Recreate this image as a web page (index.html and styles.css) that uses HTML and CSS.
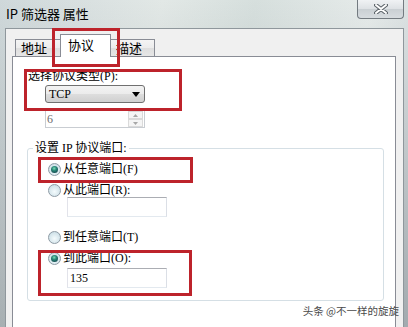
FILE: index.html
```html
<!DOCTYPE html>
<html lang="zh-CN">
<head>
    <meta charset="UTF-8">
    <title>IP 筛选器 属性</title>
    <link rel="stylesheet" href="styles.css">
</head>
<body>
    <div class="frame">
        <div class="titlebar">
            <span class="title">IP 筛选器 属性</span>
            <div class="close-btn">
                <svg width="14" height="10" viewBox="0 0 14 10">
                    <path d="M2 1 L12 9 M12 1 L2 9" stroke="#5b6268" stroke-width="4" stroke-linecap="round"/>
                    <path d="M2 1 L12 9 M12 1 L2 9" stroke="#ffffff" stroke-width="2" stroke-linecap="round"/>
                </svg>
            </div>
        </div>

        <div class="dialog">
            <div class="tabs">
                <div class="tab first">地址</div>
                <div class="tab active">协议</div>
                <div class="tab last">描述</div>
            </div>

            <div class="panel">
                <div class="label">选择协议类型(P):</div>
                <div class="combo">
                    <span>TCP</span>
                    <svg width="8" height="5" viewBox="0 0 8 5"><path d="M0 0 H8 L4 5 Z" fill="#000"/></svg>
                </div>
                <div class="spin">
                    <span class="spin-value">6</span>
                    <div class="spin-btns">
                        <div class="spin-btn"><svg width="5" height="3" viewBox="0 0 5 3"><path d="M0 3 H5 L2.5 0 Z" fill="#a7a7a7"/></svg></div>
                        <div class="spin-btn"><svg width="5" height="3" viewBox="0 0 5 3"><path d="M0 0 H5 L2.5 3 Z" fill="#a7a7a7"/></svg></div>
                    </div>
                </div>

                <fieldset class="group">
                    <legend>设置 IP 协议端口:</legend>
                    <div class="radio-row first-row"><span class="radio checked"></span>从任意端口(F)</div>
                    <div class="radio-row"><span class="radio"></span>从此端口(R):</div>
                    <div class="textbox"></div>
                    <div class="radio-row third-row"><span class="radio"></span>到任意端口(T)</div>
                    <div class="radio-row"><span class="radio checked"></span>到此端口(O):</div>
                    <div class="textbox second">135</div>
                </fieldset>
            </div>
        </div>

        <div class="mark mark-tab"></div>
        <div class="mark mark-type"></div>
        <div class="mark mark-from"></div>
        <div class="mark mark-to"></div>
        <div class="watermark">头条 @不一样的旋旋</div>
    </div>
</body>
</html>
```

FILE: styles.css
```css
body {
    margin: 0;
    font-family: 'Liberation Serif', 'Noto Sans CJK SC', serif;
    font-size: 12px;
    color: #000;
}
.frame {
    position: relative;
    width: 408px;
    height: 327px;
    overflow: hidden;
    box-sizing: border-box;
    padding: 0 4px 0 5px;
    background:
        linear-gradient(to bottom, rgba(255, 255, 255, 0) 0%, rgba(110, 118, 124, 0.45) 100%),
        linear-gradient(100deg, #cfd8da 0%, #e2e8e6 35%, #d6dfdd 55%, #e6ebea 80%, #cdd5d8 100%);
}
.titlebar {
    height: 28px;
    display: flex;
    align-items: flex-start;
}
.title {
    font-family: 'Noto Sans CJK SC', sans-serif;
    font-size: 13px;
    line-height: 28px;
    padding-left: 1px;
}
.close-btn {
    margin-left: auto;
    width: 47px;
    height: 19px;
    box-sizing: border-box;
    border: 1px solid #737a80;
    border-top: none;
    border-radius: 0 0 4px 4px;
    background: linear-gradient(#f0f2f4 0%, #dde1e4 50%, #c9cfd3 51%, #d7dcdf 100%);
    display: flex;
    justify-content: center;
    align-items: center;
}
.dialog {
    height: 299px;
    box-sizing: border-box;
    background: #f0f0f0;
    border: 1px solid #8f979c;
    border-bottom: none;
    padding: 5px 7px 0 6px;
}
.tabs {
    display: flex;
    align-items: flex-end;
    height: 22px;
    padding-left: 3px;
}
.tab {
    box-sizing: border-box;
    height: 17px;
    border: 1px solid #898c95;
    border-bottom: none;
    background: linear-gradient(#f4f4f4 0%, #ececec 50%, #dedede 51%, #e6e6e6 100%);
    font-family: 'Noto Sans CJK SC', sans-serif;
    font-size: 13px;
    line-height: 16px;
    padding-left: 5px;
}
.tab.first {
    width: 45px;
    border-right: none;
}
.tab.last {
    width: 44px;
    border-left: none;
}
.tab.active {
    position: relative;
    z-index: 1;
    width: 51px;
    height: 23px;
    margin-bottom: -1px;
    padding: 2px 0 0 7px;
    background: #fff;
}
.panel {
    box-sizing: border-box;
    width: 384px;
    height: 500px;
    background: #fff;
    border: 1px solid #898c95;
    padding: 11px 0 0 15px;
}
.label {
    line-height: 16px;
    height: 16px;
}
.combo {
    margin: 1px 0 0 17px;
    width: 100px;
    height: 18px;
    box-sizing: border-box;
    border: 1px solid #707070;
    border-radius: 3px;
    background: linear-gradient(#f3f3f3 0%, #ebebeb 50%, #dddddd 51%, #d0d0d0 100%);
    display: flex;
    align-items: center;
    justify-content: space-between;
    padding: 0 4px 0 3px;
}
.spin {
    margin: 7px 0 0 17px;
    width: 100px;
    height: 18px;
    box-sizing: border-box;
    border: 1px solid #c9cdd2;
    background: #fff;
    display: flex;
    justify-content: space-between;
}
.spin-value {
    color: #6d6d6d;
    line-height: 16px;
    padding-left: 1px;
}
.spin-btns {
    width: 15px;
    display: flex;
    flex-direction: column;
    margin: 0 1px 0 0;
}
.spin-btn {
    flex: 1;
    box-sizing: border-box;
    border: 1px solid #dadada;
    background: #f5f5f5;
    display: flex;
    justify-content: center;
    align-items: center;
}
.group {
    margin: 12px 0 0 -1px;
    width: 357px;
    box-sizing: border-box;
    border: 1px solid #d5dfe5;
    border-radius: 3px;
    padding: 0 0 12px 5px;
}
.group legend {
    padding: 0 2px;
    line-height: 16px;
}
.radio-row {
    display: flex;
    align-items: center;
    gap: 2px;
    height: 16px;
    line-height: 16px;
    margin: 5px 0 0 15px;
}
.radio-row.third-row {
    margin-top: 12px;
}
.radio {
    width: 13px;
    height: 13px;
    box-sizing: border-box;
    border-radius: 50%;
    border: 1px solid #8e9ba5;
    background: radial-gradient(circle at 50% 60%, #f4fbfd 0%, #d6e6ec 60%, #bcd4de 100%);
    display: flex;
    justify-content: center;
    align-items: center;
}
.radio.checked::after {
    content: "";
    width: 7px;
    height: 7px;
    border-radius: 50%;
    background: radial-gradient(circle at 45% 35%, #7fe0b8 0%, #2a8a7a 35%, #14494f 80%);
}
.textbox {
    margin: -1px 0 0 34px;
    width: 100px;
    height: 20px;
    box-sizing: border-box;
    border: 1px solid;
    border-color: #abadb3 #dbdfe6 #e3e9ef #e2e3ea;
    background: #fff;
    line-height: 18px;
    padding-left: 2px;
}
.textbox.second {
    margin-top: 2px;
}
.mark {
    position: absolute;
    box-sizing: border-box;
    border: 3px solid #bd232b;
}
.mark-tab {
    left: 52px;
    top: 28px;
    width: 68px;
    height: 39px;
}
.mark-type {
    left: 24px;
    top: 69px;
    width: 158px;
    height: 42px;
}
.mark-from {
    left: 38px;
    top: 157px;
    width: 155px;
    height: 26px;
}
.mark-to {
    left: 38px;
    top: 250px;
    width: 154px;
    height: 46px;
}
.watermark {
    position: absolute;
    right: 9px;
    top: 303px;
    font-family: 'Noto Sans CJK SC', sans-serif;
    font-size: 10.5px;
    line-height: 16px;
    color: #4a4a4a;
}
```
